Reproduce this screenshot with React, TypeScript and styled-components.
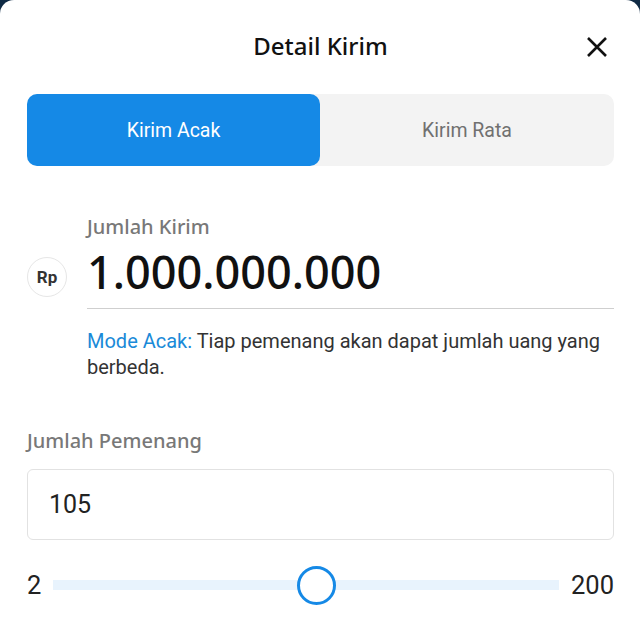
import styled, { createGlobalStyle } from "styled-components";

const GlobalStyle = createGlobalStyle`
  html, body {
    margin: 0;
    padding: 0;
    background: #0f2a44;
  }
  * {
    box-sizing: border-box;
  }
`;

const Sheet = styled.div`
  width: 640px;
  height: 640px;
  background: #ffffff;
  border-radius: 14px 14px 0 0;
  padding: 0 26px 0 27px;
  display: flex;
  flex-direction: column;
  overflow: hidden;
`;

const Header = styled.header`
  height: 94px;
  display: flex;
  align-items: center;
  justify-content: center;
  position: relative;
  padding-bottom: 4px;

  & h2 {
    margin: 0;
    font-family: "Noto Sans", "Open Sans", sans-serif;
    font-size: 24px;
    font-weight: 500;
    color: #111;
  }
`;

const CloseBtn = styled.button`
  position: absolute;
  right: 4px;
  top: 34px;
  width: 26px;
  height: 26px;
  border: none;
  background: none;
  padding: 0;
  cursor: pointer;
`;

const Tabs = styled.div`
  display: grid;
  grid-template-columns: 293px 1fr;
  height: 72px;
  background: #f3f3f3;
  border-radius: 10px;
`;

const Tab = styled.div<{ $active?: boolean }>`
  display: flex;
  align-items: center;
  justify-content: center;
  border-radius: 10px;
  font-family: Roboto, sans-serif;
  font-size: 19.5px;
  background: ${(p) => (p.$active ? "#1589e6" : "transparent")};
  color: ${(p) => (p.$active ? "#ffffff" : "#707070")};
`;

const AmountBlock = styled.section`
  display: grid;
  grid-template-columns: 60px 1fr;
  margin-top: 47px;
`;

const Badge = styled.div`
  grid-column: 1;
  grid-row: 2;
  align-self: center;
  margin-top: 4px;
  width: 40px;
  height: 40px;
  border-radius: 50%;
  border: 1.5px solid #e6e6e6;
  display: flex;
  align-items: center;
  justify-content: center;
  font-family: Roboto, sans-serif;
  font-weight: 700;
  font-size: 17px;
  color: #333;
`;

const FieldLabel = styled.div`
  font-family: "Noto Sans", "Open Sans", sans-serif;
  font-size: 20px;
  font-weight: 500;
  color: #787878;
  line-height: 28px;
`;

const AmountLabel = styled(FieldLabel)`
  grid-column: 2;
  grid-row: 1;
`;

const Amount = styled.div`
  grid-column: 2;
  grid-row: 2;
  font-family: "Noto Sans", "Open Sans", sans-serif;
  font-size: 45px;
  font-weight: 500;
  color: #111;
  line-height: 62px;
  padding-bottom: 5px;
  border-bottom: 1.5px solid #cfcfcf;
`;

const Hint = styled.p`
  grid-column: 2;
  grid-row: 3;
  margin: 19px 0 0;
  font-family: Roboto, sans-serif;
  font-size: 20px;
  line-height: 26px;
  color: #333;

  & span {
    color: #1a8ad8;
  }
`;

const WinnersBlock = styled.section`
  margin-top: 47px;
  display: flex;
  flex-direction: column;
`;

const CountInput = styled.div`
  margin-top: 14px;
  height: 71px;
  border: 1.5px solid #e2e2e2;
  border-radius: 6px;
  display: flex;
  align-items: center;
  padding-left: 21px;
  font-family: Roboto, sans-serif;
  font-size: 25px;
  color: #222;
`;

const SliderRow = styled.div`
  margin-top: 22px;
  display: flex;
  align-items: center;
  gap: 12px;
  font-family: Roboto, sans-serif;
  font-size: 25.5px;
  color: #222;
  height: 46px;
`;

const Track = styled.div`
  flex: 1;
  height: 10px;
  background: #e8f3fd;
  position: relative;
`;

const Thumb = styled.div`
  position: absolute;
  top: 50%;
  width: 39px;
  height: 39px;
  margin: -19.5px 0 0 -19.5px;
  border-radius: 50%;
  background: #ffffff;
  border: 3px solid #1589e6;
`;

const min = 2;
const max = 200;
const winners = 105;

export default function App() {
  const pct = ((winners - min) / (max - min)) * 100;
  return (
    <>
      <GlobalStyle />
      <Sheet>
        <Header>
          <h2>Detail Kirim</h2>
          <CloseBtn aria-label="Tutup">
            <svg width="26" height="26" viewBox="0 0 26 26">
              <path
                d="M4 4 L22 22 M22 4 L4 22"
                stroke="#111"
                strokeWidth="2.6"
                strokeLinecap="butt"
              />
            </svg>
          </CloseBtn>
        </Header>

        <Tabs>
          <Tab $active>Kirim Acak</Tab>
          <Tab>Kirim Rata</Tab>
        </Tabs>

        <AmountBlock>
          <AmountLabel>Jumlah Kirim</AmountLabel>
          <Badge>Rp</Badge>
          <Amount>1.000.000.000</Amount>
          <Hint>
            <span>Mode Acak:</span> Tiap pemenang akan dapat jumlah uang yang
            berbeda.
          </Hint>
        </AmountBlock>

        <WinnersBlock>
          <FieldLabel>Jumlah Pemenang</FieldLabel>
          <CountInput>{winners}</CountInput>
          <SliderRow>
            <span>{min}</span>
            <Track>
              <Thumb style={{ left: `${pct}%` }} />
            </Track>
            <span>{max}</span>
          </SliderRow>
        </WinnersBlock>
      </Sheet>
    </>
  );
}
